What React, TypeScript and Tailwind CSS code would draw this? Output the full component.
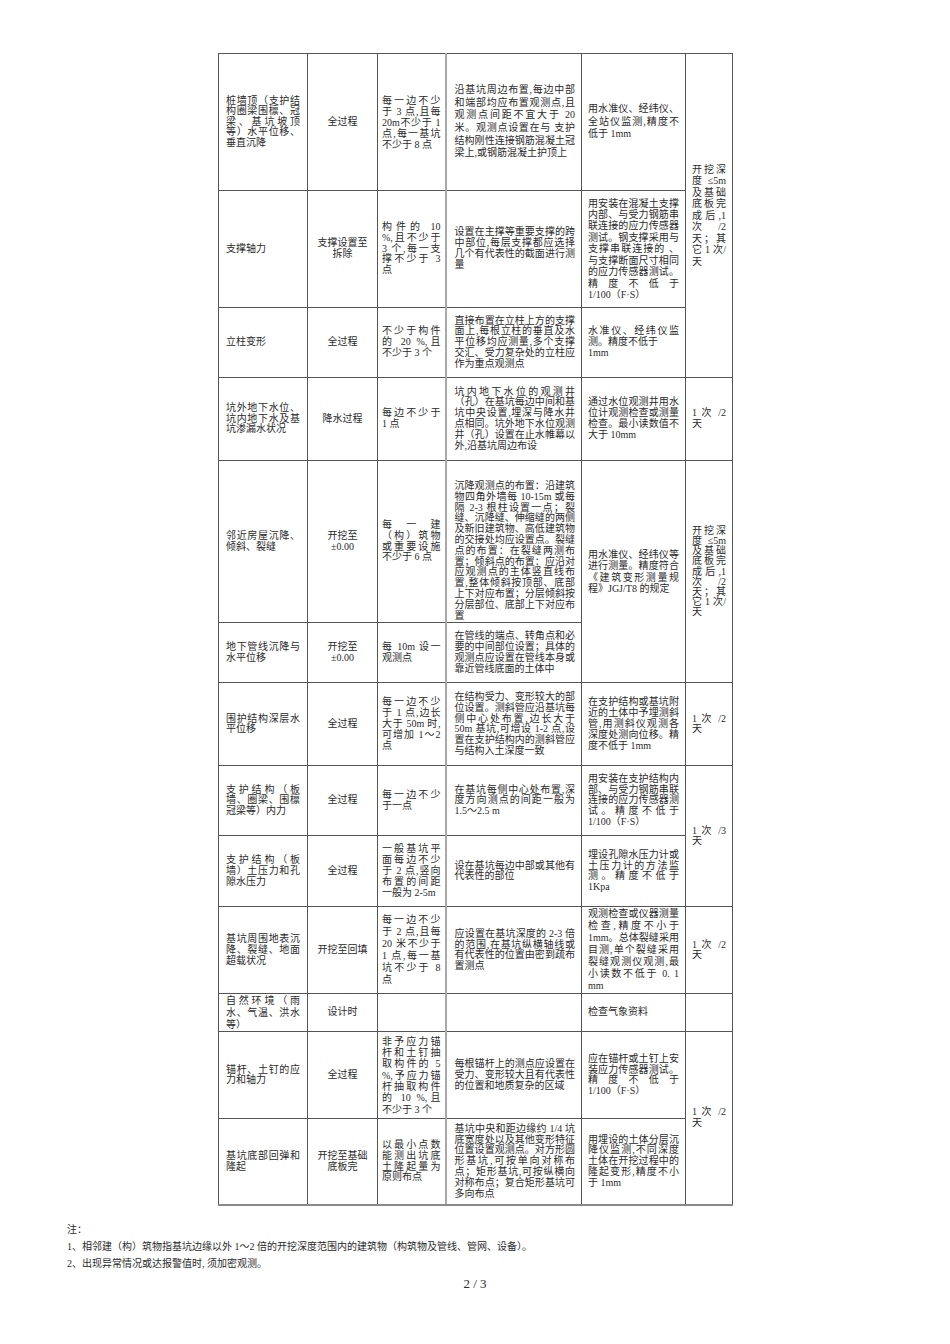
import React from "react";

type Cell = {
  lines: string[];
  center?: boolean;
  rs?: number;
  cls?: string;
};

type Row = { h: string; cells: (Cell | null)[] };

const colCls = [
  "w-[89px] px-[7px]",
  "w-[70px] px-[4px]",
  "w-[68px] px-[4px]",
  "w-[136px] pl-[8px] pr-[6px] border-l-2 border-l-[#a8a8a8]",
  "w-[104px] px-[6px]",
  "w-[47px] px-[6px]",
];

// null = spanned by a cell above
const rows: Row[] = [
  {
    h: "h-[137px]",
    cells: [
      { lines: ["桩墙顶（支护结", "构圈梁围檩、冠", "梁、基坑坡顶", "等）水平位移、", "垂直沉降"], cls: "leading-[10.5px]" },
      { lines: ["全过程"], center: true },
      { lines: ["每一边不少", "于 3 点,且每", "20m不少于 1", "点,每一基坑", "不少于 8 点"], cls: "leading-[11px]" },
      { lines: ["沿基坑周边布置,每边中部", "和端部均应布置观测点,且", "观测点间距不宜大于 20", "米。观测点设置在与 支护", "结构刚性连接钢筋混凝土冠", "梁上,或钢筋混凝土护顶上"], cls: "leading-[12.7px]" },
      { lines: ["用水准仪、经纬仪、", "全站仪监测,精度不", "低于 1mm"], cls: "leading-[12.7px]" },
      { lines: ["开挖深", "度≤5m", "及基础", "底板完", "成后,1", "次 /2", "天；其", "它 1 次/", "天"], rs: 3, cls: "leading-[11.5px]" },
    ],
  },
  {
    h: "h-[117px]",
    cells: [
      { lines: ["支撑轴力"] },
      { lines: ["支撑设置至", "拆除"], center: true },
      { lines: ["构件的 10", "%,且不少于", "3 个,每一支", "撑不少于 3", "点"] },
      { lines: ["设置在主撑等重要支撑的跨", "中部位,每层支撑都应选择", "几个有代表性的截面进行测", "量"] },
      { lines: ["用安装在混凝土支撑", "内部、与受力钢筋串", "联连接的应力传感器", "测试。钢支撑采用与", "支撑串联连接的 、", "与支撑断面尺寸相同", "的应力传感器测试。", "精度不低于", "1/100（F·S）"], cls: "leading-[11.4px]" },
      null,
    ],
  },
  {
    h: "h-[70px]",
    cells: [
      { lines: ["立柱变形"] },
      { lines: ["全过程"], center: true },
      { lines: ["不少于构件", "的 20 %,且", "不少于 3 个"] },
      { lines: ["直接布置在立柱上方的支撑", "面上,每根立柱的垂直及水", "平位移均应测量,多个支撑", "交汇、受力复杂处的立柱应", "作为重点观测点"] },
      { lines: ["水准仪、经纬仪监", "测。精度不低于 1mm"] },
      null,
    ],
  },
  {
    h: "h-[83px]",
    cells: [
      { lines: ["坑外地下水位、", "坑内地下水及基", "坑渗漏水状况"] },
      { lines: ["降水过程"], center: true },
      { lines: ["每边不少于", "1 点"] },
      { lines: ["坑内地下水位的观测井", "（孔）在基坑每边中间和基", "坑中央设置,埋深与降水井", "点相同。坑外地下水位观测", "井（孔）设置在止水帷幕以", "外,沿基坑周边布设"] },
      { lines: ["通过水位观测井用水", "位计观测检查或测量", "检查。最小读数值不", "大于 10mm"] },
      { lines: ["1 次 /2", "天"] },
    ],
  },
  {
    h: "h-[161px]",
    cells: [
      { lines: ["邻近房屋沉降、", "倾斜、裂缝"] },
      { lines: ["开挖至", "±0.00"], center: true },
      { lines: ["每一建", "（构）筑物", "或重要设施", "不少于 6 点"] },
      { lines: ["沉降观测点的布置：沿建筑", "物四角外墙每 10-15m 或每", "隔 2-3 根柱设置一点；裂", "缝、沉降缝、伸缩缝的两侧", "及新旧建筑物、高低建筑物", "的交接处均应设置点。裂缝", "点的布置：在裂缝两测布", "置；倾斜点的布置：应沿对", "应观测点的主体竖直线布", "置,整体倾斜按顶部、底部", "上下对应布置；分层倾斜按", "分层部位、底部上下对应布", "置"], cls: "pt-[20px]" },
      { lines: ["用水准仪、经纬仪等", "进行测量。精度符合", "《建筑变形测量规", "程》JGJ/T8 的规定"], rs: 2, cls: "leading-[11.5px]" },
      { lines: ["开挖深", "度≤5m", "及基础", "底板完", "成后,1", "次 /2", "天；其", "它 1 次/", "天"], rs: 2, cls: "leading-[10.2px]" },
    ],
  },
  {
    h: "h-[60px]",
    cells: [
      { lines: ["地下管线沉降与", "水平位移"] },
      { lines: ["开挖至", "±0.00"], center: true },
      { lines: ["每 10m 设一", "观测点"] },
      { lines: ["在管线的端点、转角点和必", "要的中间部位设置；具体的", "观测点应设置在管线本身或", "靠近管线底面的土体中"] },
      null,
      null,
    ],
  },
  {
    h: "h-[83px]",
    cells: [
      { lines: ["围护结构深层水", "平位移"] },
      { lines: ["全过程"], center: true },
      { lines: ["每一边不少", "于 1 点,边长", "大于 50m 时,", "可增加 1～2", "点"] },
      { lines: ["在结构受力、变形较大的部", "位设置。测斜管应沿基坑每", "侧中心处布置,边长大于", "50m 基坑,可增设 1-2 点,设", "置在支护结构内的测斜管应", "与结构入土深度一致"] },
      { lines: ["在支护结构或基坑附", "近的土体中予埋测斜", "管,用测斜仪观测各", "深度处测向位移。精", "度不低于 1mm"] },
      { lines: ["1 次 /2", "天"] },
    ],
  },
  {
    h: "h-[70px]",
    cells: [
      { lines: ["支护结构（板", "墙、圈梁、围檩", "冠梁等）内力"] },
      { lines: ["全过程"], center: true },
      { lines: ["每一边不少", "于一点"] },
      { lines: ["在基坑每侧中心处布置,深", "度方向测点的间距一般为", "1.5～2.5 m"] },
      { lines: ["用安装在支护结构内", "部、与受力钢筋串联", "连接的应力传感器测", "试。精度不低于", "1/100（F·S）"] },
      { lines: ["1 次 /3", "天"], rs: 2 },
    ],
  },
  {
    h: "h-[71px]",
    cells: [
      { lines: ["支护结构（板", "墙）土压力和孔", "隙水压力"] },
      { lines: ["全过程"], center: true },
      { lines: ["一般基坑平", "面每边不少", "于 2 点,竖向", "布置的间距", "一般为 2-5m"] },
      { lines: ["设在基坑每边中部或其他有", "代表性的部位"] },
      { lines: ["埋设孔隙水压力计或", "土压力计的方法监", "测。精度不低于", "1Kpa"] },
      null,
    ],
  },
  {
    h: "h-[86px]",
    cells: [
      { lines: ["基坑周围地表沉", "降、裂缝、地面", "超载状况"] },
      { lines: ["开挖至回填"], center: true },
      { lines: ["每一边不少", "于 2 点,且每", "20 米不少于", "1 点,每一基", "坑不少于 8", "点"], cls: "leading-[12px]" },
      { lines: ["应设置在基坑深度的 2-3 倍", "的范围,在基坑纵横轴线或", "有代表性的位置由密到疏布", "置测点"] },
      { lines: ["观测检查或仪器测量", "检查,精度不小于", "1mm。总体裂缝采用", "目测,单个裂缝采用", "裂缝观测仪观测,最", "小读数不低于 0. 1", "mm"], cls: "leading-[12px]" },
      { lines: ["1 次 /2", "天"] },
    ],
  },
  {
    h: "h-[38px]",
    cells: [
      { lines: ["自然环境（雨", "水、气温、洪水", "等）"], cls: "leading-[11.6px]" },
      { lines: ["设计时"], center: true },
      { lines: [] },
      { lines: [] },
      { lines: ["检查气象资料"] },
      { lines: [] },
    ],
  },
  {
    h: "h-[87px]",
    cells: [
      { lines: ["锚杆、土钉的应", "力和轴力"] },
      { lines: ["全过程"], center: true },
      { lines: ["非予应力锚", "杆和土钉抽", "取构件的 5", "%,予应力锚", "杆抽取构件", "的 10 %,且", "不少于 3 个"], cls: "leading-[11.3px]" },
      { lines: ["每根锚杆上的测点应设置在", "受力、变形较大且有代表性", "的位置和地质复杂的区域"] },
      { lines: ["应在锚杆或土钉上安", "装应力传感器测试。", "精度不低于", "1/100（F·S）"] },
      { lines: ["1 次 /2", "天"], rs: 2 },
    ],
  },
  {
    h: "h-[86px]",
    cells: [
      { lines: ["基坑底部回弹和", "隆起"] },
      { lines: ["开挖至基础", "底板完"], center: true },
      { lines: ["以最小点数", "能测出坑底", "土隆起量为", "原则布点"] },
      { lines: ["基坑中央和距边缘约 1/4 坑", "底宽度处以及其他变形特征", "位置设置观测点。对方形圆", "形基坑,可按单向对称布", "点；矩形基坑,可按纵横向", "对称布点；复合矩形基坑可", "多向布点"] },
      { lines: ["用埋设的土体分层沉", "降仪监测,不同深度", "土体在开挖过程中的", "隆起变形,精度不小", "于 1mm"] },
      null,
    ],
  },
];

function Lines({ lines, center }: { lines: string[]; center?: boolean }) {
  return (
    <>
      {lines.map((t, i) => (
        <div
          key={i}
          className={
            center
              ? "text-center"
              : i < lines.length - 1
                ? "text-justify [text-align-last:justify]"
                : "text-left"
          }
        >
          {t}
        </div>
      ))}
    </>
  );
}

export default function App() {
  return (
    <div className="w-[950px] h-[1344px] bg-white text-[#2a2a2a] font-['Liberation_Serif','Noto_Sans_CJK_SC',serif] overflow-hidden">
      <table className="ml-[218px] mt-[53px] w-[514px] table-fixed border-collapse text-[10px] leading-[10.8px]">
        <colgroup>
          <col className="w-[89px]" />
          <col className="w-[70px]" />
          <col className="w-[68px]" />
          <col className="w-[136px]" />
          <col className="w-[104px]" />
          <col className="w-[47px]" />
        </colgroup>
        <tbody>
          {rows.map((r, ri) => (
            <tr key={ri} className={r.h}>
              {r.cells.map((c, ci) =>
                c === null ? null : (
                  <td
                    key={ci}
                    rowSpan={c.rs}
                    className={`border border-[#555] py-[1px] align-middle ${colCls[ci]} ${
                      ri + (c.rs ?? 1) === rows.length ? "border-b-2 border-b-[#8a8a8a]" : ""
                    } ${c.cls ?? ""}`}
                  >
                    <Lines lines={c.lines} center={c.center} />
                  </td>
                )
              )}
            </tr>
          ))}
        </tbody>
      </table>

      <div className="pl-[67px] mt-[15px] text-[10px] leading-[17px]">
        <div>注：</div>
        <div>1、相邻建（构）筑物指基坑边缘以外 1～2 倍的开挖深度范围内的建筑物（构筑物及管线、管网、设备）。</div>
        <div>2、出现异常情况或达报警值时, 须加密观测。</div>
      </div>

      <div className="mt-[4px] text-center text-[13px] leading-[16px] font-['Liberation_Serif',serif]">2 / 3</div>
    </div>
  );
}
